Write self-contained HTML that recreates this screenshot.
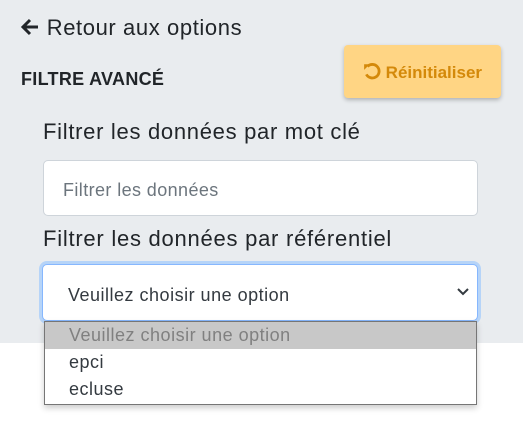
<!DOCTYPE html>
<html><head><meta charset="utf-8"><style>
body{margin:0;width:523px;height:421px;background:#fff;font-family:"Liberation Sans",sans-serif;color:#212529;position:relative;overflow:hidden}
.bg{position:absolute;left:0;top:0;width:523px;height:343px;background:#e9ecef}
.a{position:absolute;white-space:nowrap}
</style></head><body>
<div class="bg"></div>
<div class="a" style="left:20px;top:15px;font-size:22px;letter-spacing:0.6px">
<svg width="20" height="20" viewBox="0 0 20 20" style="vertical-align:-2px"><path d="M18 10H4M10 3L3 10l7 7" fill="none" stroke="#212529" stroke-width="3"/></svg> Retour aux options</div>
<div class="a" style="left:21px;top:69px;font-size:18px;font-weight:bold;letter-spacing:0.3px">FILTRE AVANCÉ</div>
<div class="a" style="left:344px;top:45px;width:157px;height:53px;background:#ffd584;border-radius:4px;box-shadow:0 2px 4px rgba(0,0,0,.25);color:#d4890a;font-weight:bold;font-size:17px;line-height:55px;text-align:center">
<svg width="18" height="18" viewBox="0 0 16 16" style="vertical-align:-2px"><path d="M4 4A6 6 0 1 1 3 11" fill="none" stroke="#d4890a" stroke-width="2.5"/><path d="M1 2L6 2 1 7Z" fill="#d4890a"/></svg> Réinitialiser</div>
<div class="a" style="left:43px;top:119px;font-size:22px;letter-spacing:0.7px">Filtrer les données par mot clé</div>
<div class="a" style="left:43px;top:160px;width:433px;height:54px;background:#fff;border:1px solid #ced4da;border-radius:5px"></div>
<div class="a" style="left:63px;top:180px;font-size:18px;letter-spacing:0.4px;color:#6c757d">Filtrer les données</div>
<div class="a" style="left:43px;top:226px;font-size:22px;letter-spacing:0.75px">Filtrer les données par référentiel</div>
<div class="a" style="left:42px;top:264px;width:434px;height:55px;background:#fff;border:1px solid #86b7fe;border-radius:5px;box-shadow:0 0 0 3px #b6d4f8"></div>
<div class="a" style="left:68px;top:285px;font-size:18px;letter-spacing:0.5px;color:#343a40">Veuillez choisir une option</div>
<svg class="a" style="left:456px;top:287px" width="14" height="10" viewBox="0 0 14 10"><path d="M2 2l5 5 5-5" fill="none" stroke="#343a40" stroke-width="2"/></svg>
<div class="a" style="left:44px;top:321px;width:431px;height:82px;background:#fff;border:1px solid #767676;box-shadow:0 3px 6px rgba(0,0,0,.2);font-size:18px;letter-spacing:0.5px;line-height:27px">
<div style="background:#c8c8c8;color:#808080;padding-left:24px;height:27px">Veuillez choisir une option</div>
<div style="padding-left:24px;color:#343a40;line-height:27px">epci</div>
<div style="padding-left:24px;color:#343a40;line-height:26px">ecluse</div>
</div>
</body></html>
